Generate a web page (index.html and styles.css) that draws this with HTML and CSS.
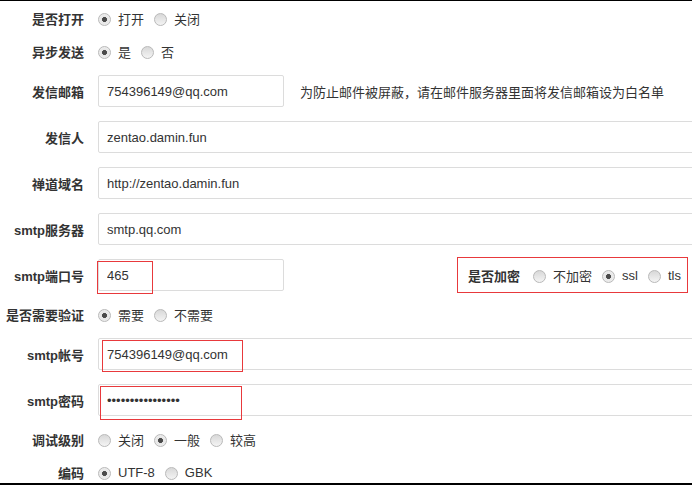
FILE: index.html
```html
<!DOCTYPE html>
<html lang="zh-CN">
<head>
<meta charset="utf-8">
<title>发信设置</title>
<link rel="stylesheet" href="styles.css">
</head>
<body>
<div class="frame">
  <div class="row">
    <div class="label">是否打开</div>
    <div class="opts">
      <span class="opt"><span class="radio on"></span>打开</span>
      <span class="opt"><span class="radio"></span>关闭</span>
    </div>
  </div>
  <div class="row">
    <div class="label">异步发送</div>
    <div class="opts">
      <span class="opt"><span class="radio on"></span>是</span>
      <span class="opt"><span class="radio"></span>否</span>
    </div>
  </div>
  <div class="row tall">
    <div class="label">发信邮箱</div>
    <input class="input" type="text" value="754396149@qq.com">
    <span class="hint">为防止邮件被屏蔽，请在邮件服务器里面将发信邮箱设为白名单</span>
  </div>
  <div class="row tall">
    <div class="label">发信人</div>
    <input class="input wide" type="text" value="zentao.damin.fun">
  </div>
  <div class="row tall">
    <div class="label">禅道域名</div>
    <input class="input wide" type="text" value="http://zentao.damin.fun">
  </div>
  <div class="row tall">
    <div class="label">smtp服务器</div>
    <input class="input wide" type="text" value="smtp.qq.com">
  </div>
  <div class="row tall">
    <div class="label">smtp端口号</div>
    <div class="field">
      <input class="input" type="text" value="465">
      <span class="mark mark-port"></span>
    </div>
    <div class="enc">
      <span class="enc-label">是否加密</span>
      <span class="opt"><span class="radio"></span>不加密</span>
      <span class="opt"><span class="radio on"></span>ssl</span>
      <span class="opt last"><span class="radio"></span>tls</span>
    </div>
  </div>
  <div class="row">
    <div class="label">是否需要验证</div>
    <div class="opts">
      <span class="opt"><span class="radio on"></span>需要</span>
      <span class="opt"><span class="radio"></span>不需要</span>
    </div>
  </div>
  <div class="row tall">
    <div class="label">smtp帐号</div>
    <div class="field">
      <input class="input wide" type="text" value="754396149@qq.com">
      <span class="mark mark-user"></span>
    </div>
  </div>
  <div class="row tall">
    <div class="label">smtp密码</div>
    <div class="field">
      <input class="input wide" type="password" value="1234567890123456">
      <span class="mark mark-pass"></span>
    </div>
  </div>
  <div class="row">
    <div class="label">调试级别</div>
    <div class="opts">
      <span class="opt"><span class="radio"></span>关闭</span>
      <span class="opt"><span class="radio on"></span>一般</span>
      <span class="opt"><span class="radio"></span>较高</span>
    </div>
  </div>
  <div class="row">
    <div class="label">编码</div>
    <div class="opts">
      <span class="opt"><span class="radio on"></span>UTF-8</span>
      <span class="opt"><span class="radio"></span>GBK</span>
    </div>
  </div>
</div>
</body>
</html>
```
FILE: styles.css
```css
html, body {
  margin: 0;
  padding: 0;
  background: #fff;
}
body {
  font-family: "Liberation Sans", Arial, "Noto Sans CJK SC", sans-serif;
  font-size: 13px;
  color: #333;
}
.frame {
  height: 485px;
  box-sizing: border-box;
  border-top: 1px solid #000;
  border-bottom: 2px solid #000;
  padding-top: 1px;
  overflow: hidden;
}
.row {
  display: flex;
  align-items: center;
  height: 33px;
  white-space: nowrap;
}
.row.tall {
  height: 46px;
}
.label {
  flex: none;
  width: 84px;
  margin-right: 14px;
  text-align: right;
  font-weight: bold;
  color: #333;
}
.opts {
  display: flex;
  align-items: center;
}
.opt {
  display: flex;
  align-items: center;
  margin-right: 10px;
}
.opt.last {
  margin-right: 0;
}
.radio {
  flex: none;
  width: 13px;
  height: 13px;
  box-sizing: border-box;
  border-radius: 50%;
  border: 1px solid #b9b9b9;
  background: linear-gradient(#d8d8d8, #f4f4f4);
  margin-right: 7px;
  margin-top: 2px;
}
.radio.on {
  background: radial-gradient(circle, #4a4a4a 0, #4a4a4a 2.2px, #e6e6e6 2.8px, #f2f2f2 100%);
}
.input {
  flex: none;
  display: block;
  width: 186px;
  height: 32px;
  box-sizing: border-box;
  margin: 0;
  border: 1px solid #dcdcdc;
  border-radius: 2px;
  padding: 0 8px;
  font-family: "Liberation Sans", Arial, "Noto Sans CJK SC", sans-serif;
  font-size: 13px;
  color: #333;
  background: #fff;
  outline: none;
}
.input.wide {
  width: 640px;
}
.hint {
  margin-left: 16px;
  color: #333;
}
.field {
  position: relative;
  flex: none;
}
.mark {
  position: absolute;
  border: 1px solid #e8393c;
  box-sizing: border-box;
}
.mark-port {
  left: -1px;
  top: 2px;
  width: 56px;
  height: 33px;
}
.mark-user {
  left: 4px;
  top: 2px;
  width: 141px;
  height: 32px;
}
.mark-pass {
  left: 2px;
  top: 2px;
  width: 142px;
  height: 34px;
}
.enc {
  display: flex;
  align-items: center;
  margin-left: auto;
  margin-right: 4px;
  height: 36px;
  box-sizing: border-box;
  border: 1px solid #e8393c;
  padding: 0 6px 0 10px;
}
.enc-label {
  font-weight: bold;
  margin-right: 13px;
}
```
